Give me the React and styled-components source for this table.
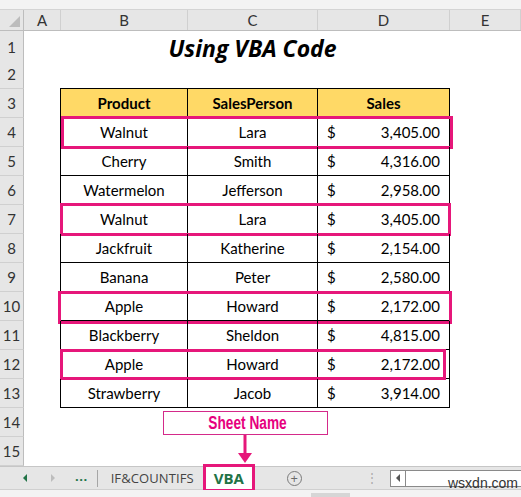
import styled, { createGlobalStyle } from "styled-components";

const GlobalStyle = createGlobalStyle`
  body {
    margin: 0;
    background: #fff;
    font-family: Lato, "Open Sans", sans-serif;
  }
`;

const COLS = "24px 37px 127px 130px 132px 71px";

const Page = styled.div`
  position: relative;
  width: 521px;
  height: 497px;
  overflow: hidden;
  background: #fff;
  display: flex;
  flex-direction: column;
`;

const TopStrip = styled.div`
  height: 9px;
  background: #f3f3f3;
  border-bottom: 1px solid #d4d4d4;
`;

const HeaderRow = styled.div`
  display: grid;
  grid-template-columns: ${COLS};
  height: 21px;
  background: #e6e6e6;
  border-bottom: 1px solid #bdbdbd;
  box-sizing: border-box;
`;

const Corner = styled.div`
  position: relative;
  border-right: 1px solid #bdbdbd;
  &::after {
    content: "";
    position: absolute;
    right: 3px;
    bottom: 3px;
    border-style: solid;
    border-width: 0 0 11px 11px;
    border-color: transparent transparent #bcbcbc transparent;
  }
`;

const ColLetter = styled.div`
  display: flex;
  align-items: center;
  justify-content: center;
  font-size: 15px;
  color: #333;
  border-right: 1px solid #d0d0d0;
`;

const Row = styled.div`
  position: relative;
  display: grid;
  grid-template-columns: ${COLS};
  height: 29px;
`;

const RowNum = styled.div`
  display: flex;
  align-items: center;
  justify-content: center;
  font-size: 15px;
  color: #333;
  background: #e6e6e6;
  border-right: 1px solid #bdbdbd;
  border-bottom: 1px solid #d0d0d0;
`;

const Cell = styled.div`
  display: flex;
  align-items: center;
  justify-content: center;
  padding: 0 ${(p) => (p.$pad ? "9px" : "0")};
  font-size: 15px;
  color: #000;
  background: ${(p) => (p.$head ? "#ffd966" : "transparent")};
  font-weight: ${(p) => (p.$head ? 700 : 400)};
  border-right: ${(p) => (p.$table ? "1px solid #000" : "none")};
  border-bottom: ${(p) => (p.$table ? "1px solid #000" : "none")};
  border-left: ${(p) => (p.$first ? "1px solid #000" : "none")};
  border-top: ${(p) => (p.$top ? "1px solid #000" : "none")};
  margin-left: ${(p) => (p.$first ? "-1px" : "0")};
  margin-top: ${(p) => (p.$top ? "-1px" : "0")};
`;

const Title = styled.div`
  grid-column: 3 / 6;
  display: flex;
  align-items: center;
  justify-content: center;
  font-family: "Open Sans", sans-serif;
  font-size: 23px;
  font-weight: 700;
  font-style: italic;
  color: #000;
  padding-top: 1px;
  padding-right: 6px;
`;

const Money = styled.div`
  display: flex;
  align-items: center;
  justify-content: space-between;
  width: 100%;
`;

const Highlight = styled.div`
  position: absolute;
  left: ${(p) => p.$l}px;
  right: ${(p) => 521 - p.$r}px;
  top: ${(p) => p.$t}px;
  bottom: ${(p) => p.$b}px;
  border: 3px solid #e6177a;
  pointer-events: none;
`;

const TabBar = styled.div`
  display: flex;
  align-items: center;
  height: 24px;
  background: #e6e6e6;
  border-top: 1px solid #c6c6c6;
  border-bottom: 1px solid #d0d0d0;
  box-sizing: border-box;
  font-family: "Open Sans", sans-serif;
`;

const NavArrow = styled.div`
  width: 0;
  height: 0;
  margin-left: ${(p) => p.$ml}px;
  border-top: 4px solid transparent;
  border-bottom: 4px solid transparent;
  ${(p) =>
    p.$dir === "left"
      ? `border-right: 4px solid ${p.$color};`
      : `border-left: 4px solid ${p.$color};`}
`;

const Dots = styled.div`
  margin-left: 20px;
  font-size: 13px;
  font-weight: 700;
  color: #217346;
  letter-spacing: 0.5px;
  line-height: 1;
  padding-bottom: 4px;
`;

const Sep = styled.div`
  width: 1px;
  height: 17px;
  background: #a6a6a6;
  margin-left: ${(p) => p.$ml}px;
`;

const SheetTab = styled.div`
  margin-left: ${(p) => p.$ml}px;
  font-size: 13px;
  color: #444;
  letter-spacing: 0.1px;
`;

const ActiveTab = styled.div`
  margin-left: 9px;
  width: 52px;
  height: 28px;
  box-sizing: border-box;
  border: 3px solid #e6177a;
  background: #fff;
  display: flex;
  align-items: center;
  justify-content: center;
  font-size: 15px;
  font-weight: 700;
  color: #217346;
  align-self: flex-end;
  margin-bottom: -3px;
`;

const AddBtn = styled.div`
  margin-left: 32px;
  width: 13px;
  height: 13px;
  border: 1px solid #7a7a7a;
  border-radius: 50%;
  display: flex;
  align-items: center;
  justify-content: center;
  color: #6a6a6a;
  font-size: 13px;
  line-height: 1;
`;

const Grip = styled.div`
  margin-left: 64px;
  color: #aaa;
  font-size: 12px;
  line-height: 1;
`;

const Scroll = styled.div`
  margin-left: 12px;
  flex: 1;
  height: 15px;
  background: #fff;
  border: 1px solid #8a8a8a;
  border-right: none;
  display: flex;
`;

const ScrollBtn = styled.div`
  width: 14px;
  border-right: 1px solid #8a8a8a;
  display: flex;
  align-items: center;
  justify-content: center;
`;

const BottomStrip = styled.div`
  flex: 1;
  background: #f3f3f3;
  position: relative;
  &::after {
    content: "";
    position: absolute;
    left: 311px;
    width: 39px;
    top: 3px;
    bottom: 0;
    background: #d6d6d6;
  }
`;

const Callout = styled.div`
  position: absolute;
  left: 163px;
  top: 411px;
  width: 165px;
  height: 24px;
  box-sizing: border-box;
  border: 1.5px solid #d42a8a;
  background: #fff;
  display: flex;
  align-items: center;
  justify-content: center;
  padding-left: 4px;
`;

const CalloutText = styled.span`
  display: inline-block;
  font-family: "Liberation Sans", Arial, sans-serif;
  font-weight: 700;
  font-size: 18px;
  color: #e6007e;
  transform: scaleX(0.76);
  white-space: nowrap;
`;

const Arrow = styled.svg`
  position: absolute;
  left: 236px;
  top: 435px;
`;

const Watermark = styled.div`
  position: absolute;
  left: 448px;
  top: 475px;
  font-family: "Liberation Sans", sans-serif;
  font-size: 14px;
  color: #333;
`;

const data = [
  ["Walnut", "Lara", "3,405.00"],
  ["Cherry", "Smith", "4,316.00"],
  ["Watermelon", "Jefferson", "2,958.00"],
  ["Walnut", "Lara", "3,405.00"],
  ["Jackfruit", "Katherine", "2,154.00"],
  ["Banana", "Peter", "2,580.00"],
  ["Apple", "Howard", "2,172.00"],
  ["Blackberry", "Sheldon", "4,815.00"],
  ["Apple", "Howard", "2,172.00"],
  ["Strawberry", "Jacob", "3,914.00"],
];

const marks = {
  4: { l: 61, r: 453, t: -2, b: -2 },
  7: { l: 60, r: 451, t: -2, b: -2 },
  10: { l: 58, r: 452, t: -1, b: -3 },
  12: { l: 60, r: 446, t: -1, b: -1 },
};

function Empty() {
  return (
    <>
      <Cell />
      <Cell />
      <Cell />
      <Cell />
      <Cell />
    </>
  );
}

export default function App() {
  const rows = [];
  for (let r = 1; r <= 15; r++) {
    let content;
    if (r === 1) {
      content = (
        <>
          <Cell />
          <Title>Using VBA Code</Title>
          <Cell />
        </>
      );
    } else if (r === 3) {
      content = (
        <>
          <Cell />
          <Cell $table $head $first $top>Product</Cell>
          <Cell $table $head $top>SalesPerson</Cell>
          <Cell $table $head $top>Sales</Cell>
          <Cell />
        </>
      );
    } else if (r >= 4 && r <= 13) {
      const [p, s, v] = data[r - 4];
      content = (
        <>
          <Cell />
          <Cell $table $first>{p}</Cell>
          <Cell $table>{s}</Cell>
          <Cell $table $pad>
            <Money>
              <span>$</span>
              <span>{v}</span>
            </Money>
          </Cell>
          <Cell />
        </>
      );
    } else {
      content = <Empty />;
    }
    const m = marks[r];
    rows.push(
      <Row key={r}>
        <RowNum>{r}</RowNum>
        {content}
        {m && <Highlight $l={m.l} $r={m.r} $t={m.t} $b={m.b} />}
      </Row>
    );
  }

  return (
    <Page>
      <GlobalStyle />
      <TopStrip />
      <HeaderRow>
        <Corner />
        {["A", "B", "C", "D", "E"].map((c) => (
          <ColLetter key={c}>{c}</ColLetter>
        ))}
      </HeaderRow>
      {rows}
      <TabBar>
        <NavArrow $dir="left" $color="#217346" $ml={23} />
        <NavArrow $dir="right" $color="#bdbdbd" $ml={24} />
        <Dots>...</Dots>
        <Sep $ml={9} />
        <SheetTab $ml={13}>IF&amp;COUNTIFS</SheetTab>
        <ActiveTab>VBA</ActiveTab>
        <AddBtn>+</AddBtn>
        <Grip>⋮</Grip>
        <Scroll>
          <ScrollBtn>
            <NavArrow $dir="left" $color="#555" $ml={0} />
          </ScrollBtn>
        </Scroll>
      </TabBar>
      <BottomStrip />
      <Callout>
        <CalloutText>Sheet Name</CalloutText>
      </Callout>
      <Arrow width="18" height="29" viewBox="0 0 18 29">
        <line x1="9" y1="0" x2="9" y2="20" stroke="#e6177a" strokeWidth="3" />
        <polygon points="2,18 16,18 9,28" fill="#e6177a" />
      </Arrow>
      <Watermark>wsxdn.com</Watermark>
    </Page>
  );
}
